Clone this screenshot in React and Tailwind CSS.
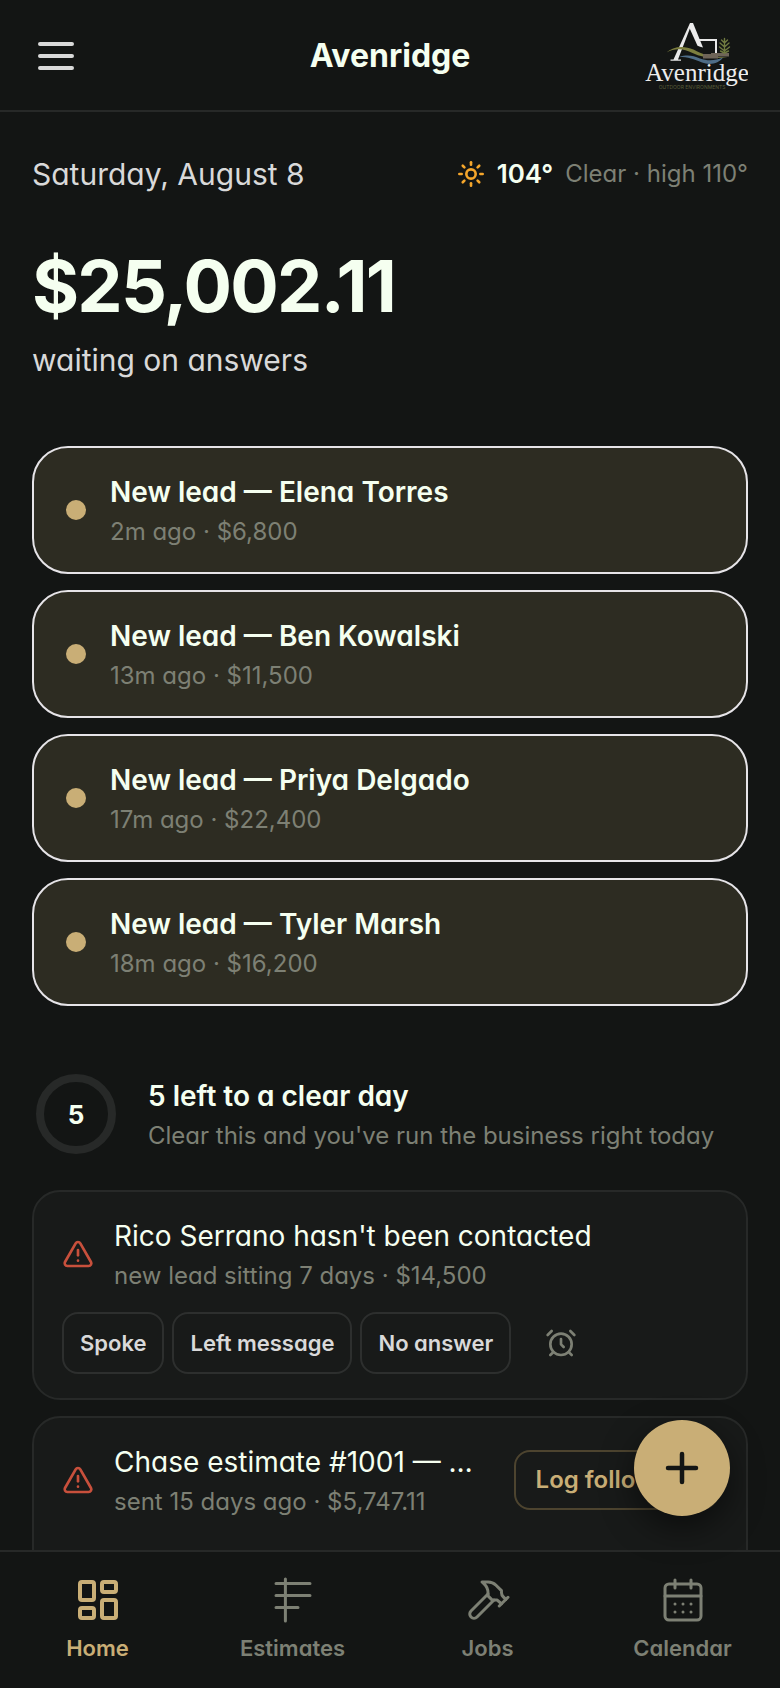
import { AlarmClock, CalendarDays, LayoutDashboard, Plus, Sun, TriangleAlert } from "lucide-react";

const leads = [
  { name: "Elena Torres", meta: "2m ago · $6,800" },
  { name: "Ben Kowalski", meta: "13m ago · $11,500" },
  { name: "Priya Delgado", meta: "17m ago · $22,400" },
  { name: "Tyler Marsh", meta: "18m ago · $16,200" },
];

function MenuIcon() {
  return (
    <svg viewBox="0 0 24 24" className="size-12" fill="none" stroke="currentColor" strokeWidth="2" strokeLinecap="round" aria-hidden="true">
      <path d="M4 6h16M4 12h16M4 18h16" />
    </svg>
  );
}

function EstimatesIcon({ className, strokeWidth }) {
  return (
    <svg viewBox="0 0 24 24" className={className} fill="none" stroke="currentColor" strokeWidth={strokeWidth} strokeLinecap="round" aria-hidden="true">
      <path d="M8.2 1.5v21M3.5 3.7h17M3.5 9.7h17M3.5 15.7h11" />
    </svg>
  );
}

function HammerIcon({ className, strokeWidth }) {
  return (
    <svg viewBox="0 0 24 24" className={className} fill="none" stroke="currentColor" strokeWidth={strokeWidth} strokeLinecap="round" strokeLinejoin="round" aria-hidden="true">
      <path d="m15 12-8.5 8.5c-.83.83-2.17.83-3 0a2.12 2.12 0 0 1 0-3L12 9" />
      <path d="M17.64 15 22 10.64" />
      <path d="m20.91 11.7-1.25-1.25c-.6-.6-.93-1.4-.93-2.25v-.86L16.01 4.6a5.56 5.56 0 0 0-3.94-1.64H9l.92.82A6.18 6.18 0 0 1 12 8.4v1.56l2 2h2.47l2.26 1.91" />
    </svg>
  );
}

function Logo() {
  return (
    <svg viewBox="0 0 104 72" className="h-18 w-26" role="img" aria-label="Avenridge Outdoor Environments">
      <path d="M46 3h2L34 39.5h3v1.3H26.5v-1.3h3z" fill="#e8e8e8" />
      <path d="M46.5 3h2.500l10 24.500c-2-.3-3.800-1-5.500-1.800L45 7z" fill="#ececec" />
      <path d="M55 20h17v13.500" stroke="#e8e8e8" strokeWidth="2" fill="none" />
      <path d="M22.500 32.500c6-6 17-7.500 27-3 9 4.500 16 8 34 8-14 1.500-26 0-35-4.500-9-5-18-5-26-.5z" fill="#7d7f3f" />
      <path d="M35 37c8-2.500 14-1.500 21 1.500 7 2.500 15 2.500 23-1-4 6-13 8-21 5-8-3.500-14-5.500-23-5.500z" fill="#4f6d87" />
      <path d="M59 34h8v-1h18v3.500H74v2H59z" fill="#6f6558" />
      <path
        d="M80.500 33V18.500M80.500 23l-3-3M80.500 23l3-3M80.500 27l-4.500-4M80.500 27l4.500-4M80.500 31l-5-4M80.500 31l5-4M80.500 33l-4-2M80.500 33l4-2"
        stroke="#6f7a40"
        strokeWidth="1.4"
        fill="none"
        strokeLinecap="round"
      />
      <text x="53" y="61" textAnchor="middle" fontFamily="Liberation Serif, serif" fontSize="25" fill="#ededed">Avenridge</text>
      <text x="48" y="69" textAnchor="middle" fontFamily="Inter, sans-serif" fontSize="5" fill="#5a5e3a">OUTDOOR ENVIRONMENTS</text>
    </svg>
  );
}

function LeadCard({ name, meta }) {
  return (
    <li>
      <button type="button" className="flex w-full items-center gap-6 rounded-[36px] border-2 border-[#e6e4e8] bg-[#2d2c22] px-8 py-[22px] text-left">
        <span className="size-5 shrink-0 rounded-full bg-[#c9ae76]" />
        <span className="min-w-0 flex-1">
          <span className="block truncate text-[28px] leading-11 font-semibold text-[#f5fff0]">New lead — {name}</span>
          <span className="block truncate text-2xl leading-9 text-[#7d8074]">{meta}</span>
        </span>
      </button>
    </li>
  );
}

function TaskCard({ title, meta, action, children }) {
  return (
    <li className="rounded-[28px] border-2 border-[#272928] bg-[#181a19] px-7 pt-[22px] pb-6">
      <div className="flex items-center gap-5">
        <TriangleAlert className="size-8 shrink-0 text-[#c8503c]" strokeWidth={2} aria-hidden="true" />
        <div className="min-w-0 flex-1">
          <h3 className="truncate text-[28px] leading-11 text-[#f5fff0]">{title}</h3>
          <p className="truncate text-2xl leading-9 text-[#7d8074]">{meta}</p>
        </div>
        {action}
      </div>
      {children}
    </li>
  );
}

const tabs = [
  { label: "Home", Icon: LayoutDashboard, active: true },
  { label: "Estimates", Icon: EstimatesIcon },
  { label: "Jobs", Icon: HammerIcon },
  { label: "Calendar", Icon: CalendarDays },
];

export default function App() {
  return (
    <div className="flex h-screen flex-col bg-[#131514] font-[Inter,sans-serif] text-[#d9d9d9] [font-feature-settings:'cv11']">
      <header className="grid grid-cols-[1fr_auto_1fr] items-center border-b-2 border-[#272928] px-8 pt-5 pb-[18px]">
        <button type="button" aria-label="Open menu" className="justify-self-start">
          <MenuIcon />
        </button>
        <h1 className="text-[32px] leading-10 font-bold text-[#f5fff0]">Avenridge</h1>
        <a href="#home" className="justify-self-end">
          <Logo />
        </a>
      </header>

      <div className="relative min-h-0 flex-1">
        <main className="h-full overflow-y-auto px-8 pt-10 [scrollbar-width:none]">
          <div className="flex items-center justify-between">
            <p className="text-3xl leading-11">Saturday, August 8</p>
            <p className="flex items-center gap-3 text-2xl">
              <Sun className="size-7 text-[#f5a62b]" strokeWidth={2.25} aria-hidden="true" />
              <span className="text-[26px] font-semibold text-[#f5fff0]">104°</span>
              <span className="text-[#7d8074]">Clear · high 110°</span>
            </p>
          </div>

          <section className="mt-[54px]">
            <p className="text-7xl leading-none font-bold tracking-tight text-[#f5fff0]">$25,002.11</p>
            <p className="mt-4 text-3xl leading-11">waiting on answers</p>
          </section>

          <ul className="mt-16 flex flex-col gap-4">
            {leads.map((lead) => (
              <LeadCard key={lead.name} {...lead} />
            ))}
          </ul>

          <section className="mt-16">
            <div className="flex items-center gap-7">
              <div className="p-1">
                <div className="flex size-20 items-center justify-center rounded-full border-8 border-[#272928] text-[26px] font-bold text-[#f5fff0]">5</div>
              </div>
              <div className="min-w-0 flex-1">
                <h2 className="text-[28px] leading-11 font-semibold text-[#f5fff0]">5 left to a clear day</h2>
                <p className="text-2xl leading-9 text-[#7d8074]">Clear this and you've run the business right today</p>
              </div>
            </div>

            <ul className="mt-8 flex flex-col gap-4 pb-10">
              <TaskCard title="Rico Serrano hasn't been contacted" meta="new lead sitting 7 days · $14,500">
                <div className="mt-[18px] flex items-stretch gap-2 text-[22px] leading-[34px] font-semibold">
                  <button type="button" className="rounded-2xl border-2 border-[#2d2f2e] px-4 py-3">Spoke</button>
                  <button type="button" className="rounded-2xl border-2 border-[#2d2f2e] px-4 py-3">Left message</button>
                  <button type="button" className="rounded-2xl border-2 border-[#2d2f2e] px-4 py-3">No answer</button>
                  <button type="button" aria-label="Snooze" className="flex items-center px-[26px] text-[#7d8074]">
                    <AlarmClock className="size-8" strokeWidth={2} />
                  </button>
                </div>
              </TaskCard>
              <TaskCard
                title="Chase estimate #1001 — …"
                meta="sent 15 days ago · $5,747.11"
                action={
                  <button type="button" className="shrink-0 rounded-2xl border-2 border-[#4d442f] px-5 py-3 text-2xl font-semibold text-[#c9ae76]">
                    Log follow-up
                  </button>
                }
              >
                <div className="h-16" />
              </TaskCard>
            </ul>
          </section>
        </main>

        <button
          type="button"
          aria-label="Add"
          className="absolute right-[50px] bottom-[34px] flex size-24 items-center justify-center rounded-full bg-[#c9ae76] text-[#131514] shadow-[0_12px_32px_rgba(0,0,0,0.5)]"
        >
          <Plus className="size-12" strokeWidth={2.25} />
        </button>
      </div>

      <nav className="grid grid-cols-4 border-t-2 border-[#272928] pt-6 pb-6">
        {tabs.map(({ label, Icon, active }) => (
          <a
            key={label}
            href={"#" + label.toLowerCase()}
            aria-current={active ? "page" : undefined}
            className={"flex flex-col items-center gap-2 text-[22px] leading-8 font-semibold " + (active ? "text-[#c9ae76]" : "text-[#7d8074]")}
          >
            <Icon className="size-12" strokeWidth={active ? 2 : 1.5} />
            {label}
          </a>
        ))}
      </nav>
    </div>
  );
}
